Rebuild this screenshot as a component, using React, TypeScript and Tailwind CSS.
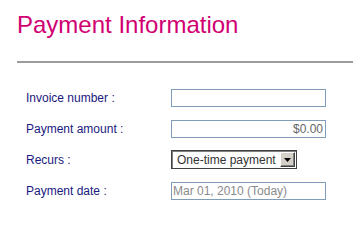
const fieldBase =
  "h-[18px] w-[155px] border border-[#7f9db9] bg-white text-[12px] leading-none outline-none";

function SelectBox({ value }: { value: string }) {
  return (
    <div className="flex h-[19px] w-[126px] items-center border border-[#404040] bg-white shadow-[inset_1px_1px_0_#808080]">
      <span className="flex-1 pl-[5px] text-[12px] leading-none text-[#333]">{value}</span>
      <span className="mr-[1px] flex h-[15px] w-[15px] items-center justify-center border border-t-white border-l-white border-r-[#404040] border-b-[#404040] bg-[#d4d0c8] shadow-[inset_-1px_-1px_0_#808080]">
        <svg width="7" height="4" viewBox="0 0 7 4">
          <path d="M0 0h7L3.5 4z" fill="#000" />
        </svg>
      </span>
    </div>
  );
}

export default function App() {
  const rows = [
    {
      label: "Invoice number :",
      field: <input readOnly value="" className={`${fieldBase} px-[2px]`} />,
    },
    {
      label: "Payment amount :",
      field: (
        <input
          readOnly
          value="$0.00"
          className={`${fieldBase} pr-[2px] text-right text-[#666]`}
        />
      ),
    },
    { label: "Recurs :", field: <SelectBox value="One-time payment" /> },
    {
      label: "Payment date :",
      field: (
        <input
          readOnly
          value="Mar 01, 2010 (Today)"
          className={`${fieldBase} pl-[1px] text-[#8a8a8a]`}
        />
      ),
    },
  ];

  return (
    <div className="h-[215px] w-[362px] bg-white pl-[17px] pt-[13px] font-['Liberation_Sans',Arial,sans-serif]">
      <h1 className="text-[24px] leading-[24px] text-[#d10072]">Payment Information</h1>
      <div className="mt-[24px] h-[2px] w-[336px] bg-[#9c9c9c]" />
      <div className="mt-[19px] pl-[9px]">
        {rows.map((r) => (
          <div key={r.label} className="flex h-[31px] items-center">
            <span className="w-[145px] text-[12px] leading-none text-[#1a1a80]">{r.label}</span>
            {r.field}
          </div>
        ))}
      </div>
    </div>
  );
}
